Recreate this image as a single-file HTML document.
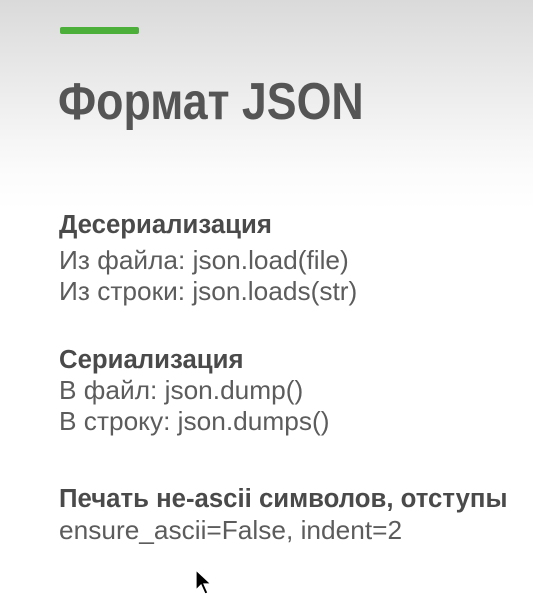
<!DOCTYPE html>
<html><head><meta charset="utf-8"><style>
html,body{margin:0;padding:0}
body{width:533px;height:605px;overflow:hidden;position:relative;font-family:"Liberation Sans","DejaVu Sans",sans-serif;
background:linear-gradient(#dadada 0px,#ececec 90px,#fbfbfb 170px,#fff 210px);}
.bar{position:absolute;left:60px;top:27px;width:79px;height:7px;background:#4caf3a;border-radius:2px}
h1{position:absolute;left:58px;top:72px;margin:0;font-size:52px;font-weight:bold;color:#555;white-space:nowrap;transform:scaleX(0.86);transform-origin:left top;letter-spacing:0}
.t{position:absolute;left:59px;font-size:26px;color:#5c5c5c;white-space:nowrap;line-height:30px;transform:scaleX(1.01);transform-origin:left top}
.b{font-weight:bold;color:#4a4a4a;font-size:25.5px;transform:scaleX(1.01)}
</style></head><body>
<div class="bar"></div>
<h1>Формат JSON</h1>
<div class="t b" style="top:210px">Десериализация</div>
<div class="t" style="top:245px">Из файла: json.load(file)</div>
<div class="t" style="top:276px">Из строки: json.loads(str)</div>
<div class="t b" style="top:345px">Сериализация</div>
<div class="t" style="top:375px">В файл: json.dump()</div>
<div class="t" style="top:406px">В строку: json.dumps()</div>
<div class="t b" style="top:484px">Печать не-ascii символов, отступы</div>
<div class="t" style="top:515px">ensure_ascii=False, indent=2</div>
<svg style="position:absolute;left:195px;top:569px" width="20" height="28" viewBox="0 0 20 28"><path d="M1 1 L1 21 L6 16 L10 25 L13 24 L9 15 L16 15 Z" fill="#000" stroke="#fff" stroke-width="1.2"/></svg>
</body></html>
